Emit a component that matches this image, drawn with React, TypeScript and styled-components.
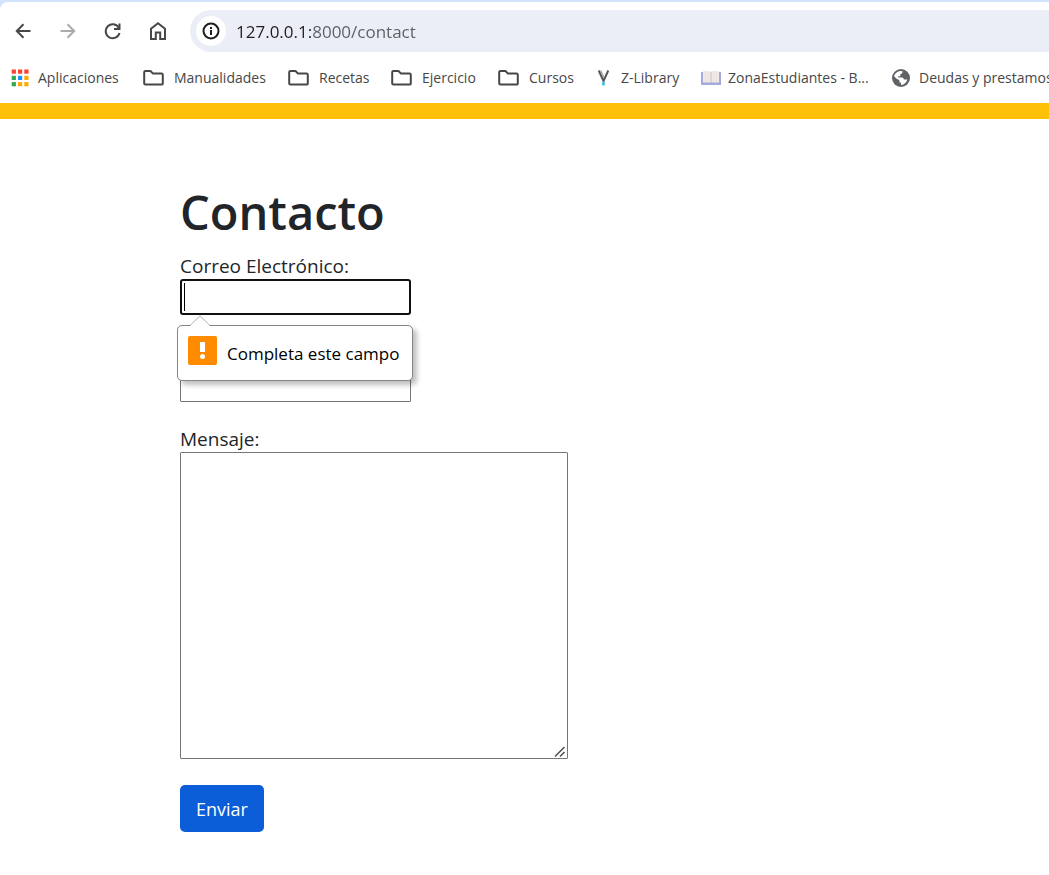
import React from "react";
import styled, { createGlobalStyle } from "styled-components";

const GlobalStyle = createGlobalStyle`
  *, *::before, *::after { box-sizing: border-box; }
  body {
    margin: 0;
    background: #fff;
    color: #212529;
    font-family: "Segoe UI", "Open Sans", "Noto Sans", sans-serif;
    font-size: 19px;
    overflow-x: hidden;
  }
  button, input, textarea { font: inherit; }
`;

const BrowserChrome = styled.header`
  background: #d3e3fd;
  padding-top: 2px;
  overflow: hidden;
`;

const ChromeSurface = styled.div`
  background: #fff;
  border-top-left-radius: 8px;
`;

const Toolbar = styled.div`
  display: flex;
  align-items: center;
  padding: 8px 0 0 8px;
`;

const NavButtons = styled.nav`
  display: flex;
  gap: 15px;
`;

const NavButton = styled.button`
  display: grid;
  place-items: center;
  width: 30px;
  height: 30px;
  padding: 0;
  border: 0;
  background: none;
  color: #474747;

  &:disabled { color: #ababab; }
`;

const AddressBar = styled.div`
  display: flex;
  align-items: center;
  gap: 10px;
  flex: 1;
  height: 42px;
  margin-left: 17px;
  padding-left: 6px;
  border-radius: 21px 0 0 21px;
  background: #ebeef7;
`;

const SiteInfoButton = styled.button`
  display: grid;
  place-items: center;
  width: 30px;
  height: 30px;
  padding: 0;
  border: 0;
  border-radius: 50%;
  background: #fff;
  color: #1f1f1f;
`;

const AddressInput = styled.input`
  flex: 1;
  min-width: 0;
  padding: 0;
  border: 0;
  outline: 0;
  background: linear-gradient(90deg, #1f1f1f 76px, #5a5d61 76px);
  background-clip: text;
  -webkit-text-fill-color: transparent;
  font-size: 17px;
`;

const BookmarksBar = styled.nav`
  display: grid;
  grid-template-columns: 132px 145px 103px 107px 96px 107px 191px auto;
  align-items: center;
  height: 51px;
  padding-left: 11px;
  white-space: nowrap;
`;

const Bookmark = styled.a<{ $folder?: boolean }>`
  display: grid;
  grid-template-columns: ${(p) => (p.$folder ? "21px" : "18px")} auto;
  gap: ${(p) => (p.$folder ? "10px" : "9px")};
  align-items: center;
  justify-content: start;
  color: #474747;
  font-size: 14px;
  text-decoration: none;
`;

const AccentBar = styled.div`
  height: 16px;
  background: #ffc107;
`;

const Main = styled.main`
  padding: 63px 20px 40px 180px;
`;

const Title = styled.h1`
  margin: 0 0 11px;
  font-size: 47px;
  font-weight: 600;
  line-height: 60px;
`;

const ContactForm = styled.form`
  display: flex;
  flex-direction: column;
  align-items: flex-start;
`;

const Field = styled.div<{ $unlabelled?: boolean }>`
  position: relative;
  display: flex;
  flex-direction: column;
  max-width: 100%;
  padding-top: ${(p) => (p.$unlabelled ? "27px" : "0")};
  margin-bottom: 24px;
`;

const FieldLabel = styled.label`
  line-height: 26px;
`;

const TextInput = styled.input`
  width: 231px;
  height: 36px;
  padding: 1px 3px;
  border: 1px solid #767676;
  border-radius: 1px;
  outline: 0;
  background: #fff;
`;

const ActiveInput = styled(TextInput)`
  border: 2px solid #101010;
  border-radius: 3px;
  background: linear-gradient(#000, #000) 2px center / 1px 28px no-repeat #fff;
  caret-color: transparent;
`;

const MessageInput = styled.textarea`
  width: 388px;
  max-width: 100%;
  height: 307px;
  padding: 3px;
  border: 1px solid #767676;
  border-radius: 1px;
  outline: 0;
  resize: both;

  &::-webkit-resizer {
    background: url("data:image/svg+xml,%3Csvg xmlns='http://www.w3.org/2000/svg' width='15' height='15'%3E%3Cpath d='M3 13.5L12.5 4M8 13.5L12.5 9' fill='none' stroke='%23555' stroke-width='1.6'/%3E%3C/svg%3E")
      right bottom no-repeat;
  }
`;

const ValidationBubble = styled.div`
  position: absolute;
  z-index: 1;
  top: calc(100% + 10px);
  left: -3px;
  display: flex;
  align-items: center;
  gap: 10px;
  width: 236px;
  height: 56px;
  padding: 0 10px 6px;
  border: 1px solid #858585;
  border-radius: 5px;
  background: #fff;
  box-shadow: 4px 4px 5px rgba(0, 0, 0, 0.25);
  color: #000;
  font-size: 17px;
  white-space: nowrap;
`;

const BubbleArrow = styled.svg`
  position: absolute;
  top: -11px;
  left: 11px;
`;

const BubbleText = styled.span`
  padding-top: 6px;
`;

const SubmitButton = styled.button`
  height: 47px;
  padding: 0 16px;
  border: 0;
  border-radius: 5px;
  margin-top: 2px;
  background: #0b5ed7;
  color: #fff;
  font-size: 18px;
`;

const ArrowIcon = ({ forward = false }: { forward?: boolean }) => (
  <svg width="16" height="16" viewBox="0 0 16 16" fill="none" stroke="currentColor" strokeWidth="2" aria-hidden="true">
    {forward ? <path d="M0.5 8H14M7.5 1.2L14.2 8L7.5 14.8" /> : <path d="M15.5 8H2M8.5 1.2L1.8 8L8.5 14.8" />}
  </svg>
);

const ReloadIcon = () => (
  <svg width="18" height="18" viewBox="0 0 18 18" fill="none" aria-hidden="true">
    <path d="M14.8 5.7A7 7 0 1 0 15.5 11" stroke="currentColor" strokeWidth="2" />
    <path d="M16.5 1.5V8H10V6H14.5V1.5Z" fill="currentColor" />
  </svg>
);

const HomeIcon = () => (
  <svg width="18" height="20" viewBox="0 0 18 20" fill="none" stroke="currentColor" strokeWidth="2" aria-hidden="true">
    <path d="M2 18V7.7L9 2.3L16 7.7V18H11.2V11.5H6.8V18Z" />
  </svg>
);

const InfoIcon = () => (
  <svg width="18" height="18" viewBox="0 0 18 18" fill="none" stroke="currentColor" strokeWidth="2" aria-hidden="true">
    <circle cx="9" cy="9" r="7.5" />
    <path d="M9 8V13M9 5V7" />
  </svg>
);

const AppsIcon = () => {
  const colors = ["#ff4131", "#ff4131", "#ff4131", "#2fa84f", "#1e90ff", "#fbab00", "#2fa84f", "#fbab00", "#fbab00"];
  return (
    <svg width="18" height="18" viewBox="0 0 18 18" aria-hidden="true">
      {colors.map((fill, i) => (
        <rect key={i} x={0.7 + (i % 3) * 6.3} y={0.5 + Math.floor(i / 3) * 6.3} width="4.2" height="4.2" fill={fill} />
      ))}
    </svg>
  );
};

const FolderIcon = () => (
  <svg width="21" height="16" viewBox="0 0 21 16" fill="none" stroke="#474747" strokeWidth="2" strokeLinejoin="round" aria-hidden="true">
    <path d="M1.2 13.5V2.2Q1.2 1 2.4 1H7.5L10 3.6H18.5Q19.8 3.6 19.8 4.8V13.4Q19.8 14.6 18.5 14.6H2.4Q1.2 14.6 1.2 13.5Z" />
  </svg>
);

const LibraryIcon = () => (
  <svg width="18" height="18" viewBox="0 0 18 18" fill="none" aria-hidden="true">
    <path d="M4.7 1.5L9.5 12L14.3 1.5" stroke="#55585b" strokeWidth="2" />
    <path d="M6.7 1.5L9.8 8.5" stroke="#a2a5a7" strokeWidth="1.4" />
    <path d="M9.5 12.5V16.5" stroke="#45b9e5" strokeWidth="2.6" />
  </svg>
);

const BookIcon = () => (
  <svg width="20" height="16" viewBox="0 0 20 16" aria-hidden="true">
    <path d="M0 2H2V12H18V2H20V15H0Z" fill="#a5a9dc" />
    <path d="M2 1H9.5V12.5H2ZM10.5 1H18V12.5H10.5Z" fill="#f0eae7" />
    <path d="M9.3 2H10.7V13H9.3Z" fill="#d8c3c3" />
    <path d="M4.5 2V12M7 2V12M13 2V12M15.5 2V12" stroke="#e5dddb" strokeWidth="0.7" />
  </svg>
);

const GlobeIcon = () => (
  <svg width="18" height="18" viewBox="0 0 18 18" aria-hidden="true">
    <circle cx="9" cy="9" r="9" fill="#5f6368" />
    <path
      d="M2 7.2C2.8 4.2 5.2 2.2 8.3 1.9L10.6 2.2L10.3 4.2L8.3 5.2V7.2H6.2V8.6H10.4C11.4 8.6 11.4 10.6 12.4 10.6H15.3C14.6 13.7 12 16 9 16V13.8L7.4 13.2V11.2L4.4 9.4Z"
      fill="#fff"
    />
    <path d="M11 2.3C13.8 3.1 15.8 5.6 16 8.6H13.7L12 6.6H10.4L10 5L11.2 4.2Z" fill="#5f6368" />
  </svg>
);

const WarningIcon = () => (
  <svg width="29" height="29" viewBox="0 0 29 29" aria-hidden="true">
    <rect width="29" height="29" rx="2" fill="#ff8c00" />
    <path d="M12 6H17V16H12Z" fill="#fff" />
    <circle cx="14.5" cy="20.5" r="2.5" fill="#fff" />
  </svg>
);

const bookmarks = [
  { label: "Aplicaciones", icon: <AppsIcon /> },
  { label: "Manualidades", icon: <FolderIcon />, folder: true },
  { label: "Recetas", icon: <FolderIcon />, folder: true },
  { label: "Ejercicio", icon: <FolderIcon />, folder: true },
  { label: "Cursos", icon: <FolderIcon />, folder: true },
  { label: "Z-Library", icon: <LibraryIcon /> },
  { label: "ZonaEstudiantes - B...", icon: <BookIcon /> },
  { label: "Deudas y prestamos", icon: <GlobeIcon /> },
];

export default function App() {
  return (
    <>
      <GlobalStyle />
      <BrowserChrome>
        <ChromeSurface>
          <Toolbar>
            <NavButtons aria-label="Navegación">
              <NavButton aria-label="Atrás"><ArrowIcon /></NavButton>
              <NavButton aria-label="Adelante" disabled><ArrowIcon forward /></NavButton>
              <NavButton aria-label="Recargar"><ReloadIcon /></NavButton>
              <NavButton aria-label="Inicio"><HomeIcon /></NavButton>
            </NavButtons>
            <AddressBar>
              <SiteInfoButton aria-label="Información del sitio"><InfoIcon /></SiteInfoButton>
              <AddressInput aria-label="Dirección" defaultValue="127.0.0.1:8000/contact" spellCheck={false} />
            </AddressBar>
          </Toolbar>
          <BookmarksBar aria-label="Marcadores">
            {bookmarks.map((b) => (
              <Bookmark key={b.label} href="#" $folder={b.folder}>
                {b.icon}
                <span>{b.label}</span>
              </Bookmark>
            ))}
          </BookmarksBar>
        </ChromeSurface>
      </BrowserChrome>
      <AccentBar />
      <Main>
        <Title>Contacto</Title>
        <ContactForm noValidate onSubmit={(e) => e.preventDefault()}>
          <Field>
            <FieldLabel htmlFor="email">Correo Electrónico:</FieldLabel>
            <ActiveInput id="email" type="email" required aria-describedby="email-error" />
            <ValidationBubble id="email-error" role="alert">
              <BubbleArrow width="22" height="12" viewBox="0 0 22 12" aria-hidden="true">
                <path d="M1 11L11 1L21 11V12H1Z" fill="#fff" />
                <path d="M1 10.5L11 0.8L21 10.5" fill="none" stroke="#b0b0b0" />
              </BubbleArrow>
              <WarningIcon />
              <BubbleText>Completa este campo</BubbleText>
            </ValidationBubble>
          </Field>
          <Field $unlabelled>
            <TextInput type="text" aria-label="Asunto" />
          </Field>
          <Field>
            <FieldLabel htmlFor="message">Mensaje:</FieldLabel>
            <MessageInput id="message" />
          </Field>
          <SubmitButton type="submit">Enviar</SubmitButton>
        </ContactForm>
      </Main>
    </>
  );
}
